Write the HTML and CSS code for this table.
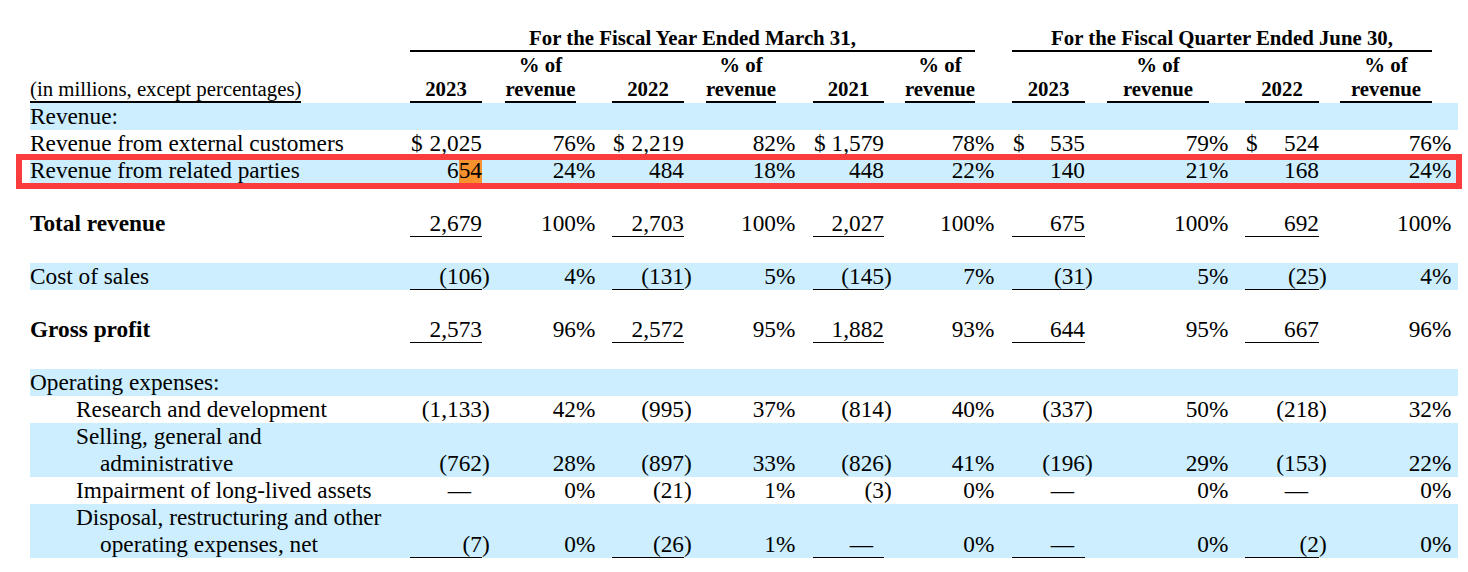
FILE: index.html
```html
<!DOCTYPE html>
<html lang="en">
<head>
<meta charset="utf-8">
<title>Revenue table</title>
<link rel="stylesheet" href="styles.css">
</head>
<body>
<div class="sheet">
  <div class="grid head hrow1">
    <div class="group g1">For the Fiscal Year Ended March 31,</div>
    <div class="group g2">For the Fiscal Quarter Ended June 30,</div>
  </div>
  <div class="grid head hrow2">
    <div class="units">(in millions, except percentages)</div>
    <div class="hc">2023</div><div></div><div class="hc">% of<br>revenue</div><div></div>
    <div class="hc">2022</div><div></div><div class="hc">% of<br>revenue</div><div></div>
    <div class="hc">2021</div><div></div><div class="hc">% of<br>revenue</div><div></div>
    <div class="hc">2023</div><div></div><div class="hc">% of<br>revenue</div><div></div>
    <div class="hc">2022</div><div></div><div class="hc">% of<br>revenue</div><div></div>
  </div>

  <div class="grid row blue"><div class="label">Revenue:</div></div>

  <div class="grid row">
    <div class="label">Revenue from external customers</div>
    <div class="v"><span class="cur">$</span>2,025</div><div class="s"></div><div class="p">76</div><div class="c">%</div>
    <div class="v"><span class="cur">$</span>2,219</div><div class="s"></div><div class="p">82</div><div class="c">%</div>
    <div class="v"><span class="cur">$</span>1,579</div><div class="s"></div><div class="p">78</div><div class="c">%</div>
    <div class="v"><span class="cur">$</span>535</div><div class="s"></div><div class="p">79</div><div class="c">%</div>
    <div class="v"><span class="cur">$</span>524</div><div class="s"></div><div class="p">76</div><div class="c">%</div>
  </div>

  <div class="grid row blue flag">
    <div class="label">Revenue from related parties</div>
    <div class="v">6<span class="hl">54</span></div><div class="s"></div><div class="p">24</div><div class="c">%</div>
    <div class="v">484</div><div class="s"></div><div class="p">18</div><div class="c">%</div>
    <div class="v">448</div><div class="s"></div><div class="p">22</div><div class="c">%</div>
    <div class="v">140</div><div class="s"></div><div class="p">21</div><div class="c">%</div>
    <div class="v">168</div><div class="s"></div><div class="p">24</div><div class="c">%</div>
  </div>

  <div class="gap"></div>

  <div class="grid row">
    <div class="label bold">Total revenue</div>
    <div class="v ul">2,679</div><div class="s"></div><div class="p">100</div><div class="c">%</div>
    <div class="v ul">2,703</div><div class="s"></div><div class="p">100</div><div class="c">%</div>
    <div class="v ul">2,027</div><div class="s"></div><div class="p">100</div><div class="c">%</div>
    <div class="v ul">675</div><div class="s"></div><div class="p">100</div><div class="c">%</div>
    <div class="v ul">692</div><div class="s"></div><div class="p">100</div><div class="c">%</div>
  </div>

  <div class="gap"></div>

  <div class="grid row blue">
    <div class="label">Cost of sales</div>
    <div class="v ul">(106</div><div class="s">)</div><div class="p">4</div><div class="c">%</div>
    <div class="v ul">(131</div><div class="s">)</div><div class="p">5</div><div class="c">%</div>
    <div class="v ul">(145</div><div class="s">)</div><div class="p">7</div><div class="c">%</div>
    <div class="v ul">(31</div><div class="s">)</div><div class="p">5</div><div class="c">%</div>
    <div class="v ul">(25</div><div class="s">)</div><div class="p">4</div><div class="c">%</div>
  </div>

  <div class="gap"></div>

  <div class="grid row">
    <div class="label bold">Gross profit</div>
    <div class="v ul">2,573</div><div class="s"></div><div class="p">96</div><div class="c">%</div>
    <div class="v ul">2,572</div><div class="s"></div><div class="p">95</div><div class="c">%</div>
    <div class="v ul">1,882</div><div class="s"></div><div class="p">93</div><div class="c">%</div>
    <div class="v ul">644</div><div class="s"></div><div class="p">95</div><div class="c">%</div>
    <div class="v ul">667</div><div class="s"></div><div class="p">96</div><div class="c">%</div>
  </div>

  <div class="gap"></div>

  <div class="grid row blue"><div class="label">Operating expenses:</div></div>

  <div class="grid row">
    <div class="label ind">Research and development</div>
    <div class="v">(1,133</div><div class="s">)</div><div class="p">42</div><div class="c">%</div>
    <div class="v">(995</div><div class="s">)</div><div class="p">37</div><div class="c">%</div>
    <div class="v">(814</div><div class="s">)</div><div class="p">40</div><div class="c">%</div>
    <div class="v">(337</div><div class="s">)</div><div class="p">50</div><div class="c">%</div>
    <div class="v">(218</div><div class="s">)</div><div class="p">32</div><div class="c">%</div>
  </div>

  <div class="grid row blue">
    <div class="label ind">Selling, general and<br>administrative</div>
    <div class="v">(762</div><div class="s">)</div><div class="p">28</div><div class="c">%</div>
    <div class="v">(897</div><div class="s">)</div><div class="p">33</div><div class="c">%</div>
    <div class="v">(826</div><div class="s">)</div><div class="p">41</div><div class="c">%</div>
    <div class="v">(196</div><div class="s">)</div><div class="p">29</div><div class="c">%</div>
    <div class="v">(153</div><div class="s">)</div><div class="p">22</div><div class="c">%</div>
  </div>

  <div class="grid row">
    <div class="label ind">Impairment of long-lived assets</div>
    <div class="v dash">—</div><div class="s"></div><div class="p">0</div><div class="c">%</div>
    <div class="v">(21</div><div class="s">)</div><div class="p">1</div><div class="c">%</div>
    <div class="v">(3</div><div class="s">)</div><div class="p">0</div><div class="c">%</div>
    <div class="v dash">—</div><div class="s"></div><div class="p">0</div><div class="c">%</div>
    <div class="v dash">—</div><div class="s"></div><div class="p">0</div><div class="c">%</div>
  </div>

  <div class="grid row blue">
    <div class="label ind">Disposal, restructuring and other<br>operating expenses, net</div>
    <div class="v ul">(7</div><div class="s">)</div><div class="p">0</div><div class="c">%</div>
    <div class="v ul">(26</div><div class="s">)</div><div class="p">1</div><div class="c">%</div>
    <div class="v ul dash">—</div><div class="s"></div><div class="p">0</div><div class="c">%</div>
    <div class="v ul dash">—</div><div class="s"></div><div class="p">0</div><div class="c">%</div>
    <div class="v ul">(2</div><div class="s">)</div><div class="p">0</div><div class="c">%</div>
  </div>
</div>
</body>
</html>
```

FILE: styles.css
```css
* {
  box-sizing: border-box;
}

body {
  margin: 0;
  background: #ffffff;
  color: #000000;
  font-family: "Liberation Serif", "Times New Roman", serif;
}

.sheet {
  width: 1468px;
  padding: 26px 10px 12px 30px;
}

.grid {
  display: grid;
  grid-template-columns: 380px 72px 23px 71px 36px 72px 22px 70px 37px 71px 21px 70px 37px 73px 22px 102px 36px 74px 21px 92px 26px;
}

/* header */
.head {
  font-size: 20.8px;
  line-height: 24px;
  font-weight: bold;
  text-align: center;
}

.group {
  border-bottom: 2px solid #000;
  white-space: nowrap;
}

.g1 {
  grid-column: 2 / 13;
}

.g2 {
  grid-column: 14 / 21;
}

.hrow2 {
  padding-top: 1px;
  align-items: end;
}

.hc {
  border-bottom: 2px solid #000;
  white-space: nowrap;
}

.units {
  justify-self: start;
  text-align: left;
  font-weight: normal;
  white-space: nowrap;
  border-bottom: 2px solid #000;
}

/* body rows */
.row {
  font-size: 23.3px;
  line-height: 27px;
  align-items: end;
}

.blue {
  background: #cceeff;
}

.label {
  text-align: left;
  white-space: nowrap;
}

.ind {
  padding-left: 70px;
  text-indent: -24px;
}

.bold {
  font-weight: bold;
}

.v {
  display: flex;
  justify-content: flex-end;
  white-space: nowrap;
}

.cur {
  margin-right: auto;
  padding-left: 1px;
}

.s,
.c {
  text-align: left;
  white-space: nowrap;
}

.p {
  text-align: right;
  white-space: nowrap;
}

.ul {
  box-shadow: inset 0 -1px 0 #000;
}

.dash {
  padding-right: 11px;
}

.gap {
  height: 26px;
}

.hl {
  background: #f8922e;
}

.flag {
  position: relative;
}

.flag::after {
  content: "";
  position: absolute;
  left: -14px;
  right: -4px;
  top: -3px;
  bottom: -5px;
  border: 6px solid #fa3c3c;
  pointer-events: none;
}
```
